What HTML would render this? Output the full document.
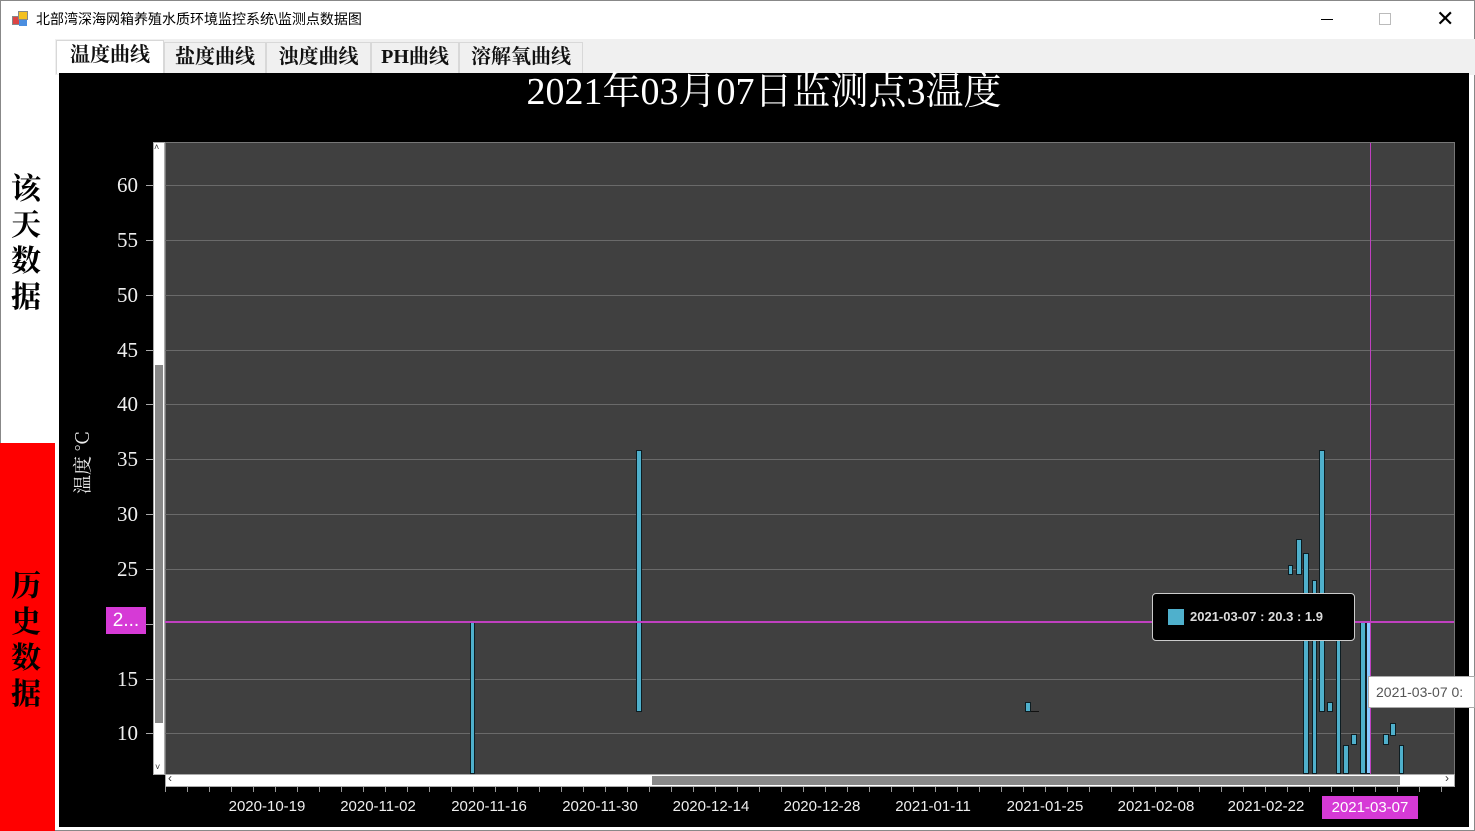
<!DOCTYPE html><html><head><meta charset="utf-8"><style>
*{margin:0;padding:0;box-sizing:border-box}
body{width:1475px;height:831px;background:#fff;position:relative;overflow:hidden;font-family:"Liberation Sans","Noto Sans CJK SC",sans-serif}
.a{position:absolute}
.tab{position:absolute;top:42px;height:31px;background:#f0f0f0;border:1px solid #d8d8d8;border-bottom:none;font-family:"Liberation Serif","Noto Serif CJK SC",serif;font-weight:bold;font-size:20px;line-height:29px;text-align:center;color:#111}
.grid{position:absolute;left:165px;width:1289px;height:1px;background:#6a6a6a}
.yl{position:absolute;left:100px;width:38px;text-align:right;color:#eee;font-family:"Liberation Serif",serif;font-size:21px;line-height:22px}
.yt{position:absolute;left:146px;width:7px;height:1px;background:#aaa}
.xl{position:absolute;top:797px;width:100px;text-align:center;color:#eee;font-size:15px;line-height:20px}
.b{position:absolute;background:#4fb0cc;border:1px solid #0d1d22}
.side{position:absolute;left:8px;width:36px;font-family:"Noto Serif CJK SC",serif;font-weight:bold;font-size:30px;line-height:36px;color:#000;text-align:center}
</style></head><body>
<div class="a" style="left:0;top:0;width:1475px;height:831px;border:1px solid #888"></div>
<div class="a" style="left:12px;top:11px;width:16px;height:16px">
<div class="a" style="left:0;top:5px;width:8px;height:9px;background:#d44;border:1px solid #888"></div>
<div class="a" style="left:6px;top:0;width:10px;height:9px;background:#f4c020;border:1px solid #888"></div>
<div class="a" style="left:7px;top:9px;width:8px;height:6px;background:#4a8ee0"></div></div>
<div class="a" style="left:36px;top:10px;font-size:14px;color:#000;line-height:18px">北部湾深海网箱养殖水质环境监控系统\监测点数据图</div>
<div class="a" style="left:1321px;top:19px;width:12px;height:1px;background:#000"></div>
<div class="a" style="left:1379px;top:13px;width:12px;height:12px;border:1px solid #bbb"></div>
<div class="a" style="left:1436px;top:7px;font-size:22px;line-height:24px;color:#000;font-weight:200">✕</div>
<div class="a" style="left:55px;top:39px;width:1420px;height:36px;background:#f0f0f0"></div>
<div class="tab" style="left:56px;top:40px;height:34px;width:108px;background:#fff">温度曲线</div>
<div class="tab" style="left:164px;width:102px">盐度曲线</div>
<div class="tab" style="left:266px;width:105px">浊度曲线</div>
<div class="tab" style="left:371px;width:88px">PH曲线</div>
<div class="tab" style="left:459px;width:124px">溶解氧曲线</div>
<div class="a" style="left:0;top:443px;width:55px;height:388px;background:#f00"></div>
<div class="side" style="top:168px">该<br>天<br>数<br>据</div>
<div class="side" style="top:565px">历<br>史<br>数<br>据</div>
<div class="a" style="left:59px;top:73px;width:1410px;height:754px;background:#000"></div>
<div class="a" style="left:360px;top:69px;width:808px;text-align:center;color:#fff;font-family:'Liberation Serif','Noto Serif CJK SC',serif;font-size:38px;line-height:46px">2021年03月07日监测点3温度</div>
<div class="a" style="left:165px;top:142px;width:1290px;height:633px;background:#404040;border:1px solid #777"></div>
<div class="grid" style="top:185px"></div><div class="grid" style="top:240px"></div><div class="grid" style="top:295px"></div><div class="grid" style="top:350px"></div><div class="grid" style="top:404px"></div><div class="grid" style="top:459px"></div><div class="grid" style="top:514px"></div><div class="grid" style="top:569px"></div><div class="grid" style="top:679px"></div><div class="grid" style="top:733px"></div>
<div class="yl" style="top:174px">60</div><div class="yl" style="top:229px">55</div><div class="yl" style="top:284px">50</div><div class="yl" style="top:339px">45</div><div class="yl" style="top:393px">40</div><div class="yl" style="top:448px">35</div><div class="yl" style="top:503px">30</div><div class="yl" style="top:558px">25</div><div class="yl" style="top:668px">15</div><div class="yl" style="top:722px">10</div>
<div class="yt" style="top:185px"></div><div class="yt" style="top:240px"></div><div class="yt" style="top:295px"></div><div class="yt" style="top:350px"></div><div class="yt" style="top:404px"></div><div class="yt" style="top:459px"></div><div class="yt" style="top:514px"></div><div class="yt" style="top:569px"></div><div class="yt" style="top:624px"></div><div class="yt" style="top:679px"></div><div class="yt" style="top:733px"></div>
<div class="a" style="left:106px;top:607px;width:40px;height:27px;background:#d63ad6;color:#fff;font-size:19px;line-height:27px;text-align:center">2...</div>
<div class="a" style="left:57px;top:458px;width:50px;transform:rotate(-90deg);color:#eee;font-family:'Noto Serif CJK SC',serif;font-size:19px;line-height:22px;white-space:nowrap;text-align:center">温度 °C</div>
<div class="a" style="left:153px;top:142px;width:12px;height:633px;background:#fff;border:1px solid #aaa"></div>
<div class="a" style="left:155px;top:365px;width:8px;height:358px;background:#888"></div>
<div class="a" style="left:154px;top:142px;font-size:9px;color:#333">˄</div>
<div class="a" style="left:155px;top:762px;font-size:9px;color:#333">˅</div>
<div class="a" style="left:165px;top:774px;width:1290px;height:13px;background:#fff;border:1px solid #aaa"></div>
<div class="a" style="left:652px;top:776px;width:748px;height:9px;background:#888"></div>
<div class="a" style="left:168px;top:771px;font-size:12px;color:#333">‹</div>
<div class="a" style="left:1445px;top:771px;font-size:12px;color:#333">›</div>
<div class="a" style="left:165px;top:787px;width:1290px;height:5px;background:repeating-linear-gradient(90deg,#999 0 1px,transparent 1px 22px)"></div>
<div class="xl" style="left:217px">2020-10-19</div><div class="xl" style="left:328px">2020-11-02</div><div class="xl" style="left:439px">2020-11-16</div><div class="xl" style="left:550px">2020-11-30</div><div class="xl" style="left:661px">2020-12-14</div><div class="xl" style="left:772px">2020-12-28</div><div class="xl" style="left:883px">2021-01-11</div><div class="xl" style="left:995px">2021-01-25</div><div class="xl" style="left:1106px">2021-02-08</div><div class="xl" style="left:1216px">2021-02-22</div>
<div class="xl" style="left:1322px;width:96px;top:796px;height:23px;line-height:23px;background:#d63ad6;color:#fff">2021-03-07</div>
<div class="b" style="left:470px;top:622px;width:5px;height:152px"></div>
<div class="b" style="left:636px;top:450px;width:6px;height:262px"></div>
<div class="b" style="left:1025px;top:702px;width:6px;height:10px"></div>
<div class="a" style="left:1031px;top:711px;width:8px;height:1px;background:#111"></div>
<div class="b" style="left:1288px;top:565px;width:5px;height:10px"></div>
<div class="b" style="left:1296px;top:539px;width:6px;height:36px"></div>
<div class="b" style="left:1303px;top:553px;width:6px;height:221px"></div>
<div class="b" style="left:1312px;top:580px;width:5px;height:194px"></div>
<div class="b" style="left:1319px;top:450px;width:6px;height:262px"></div>
<div class="b" style="left:1327px;top:702px;width:6px;height:10px"></div>
<div class="b" style="left:1336px;top:600px;width:5px;height:174px"></div>
<div class="b" style="left:1343px;top:745px;width:6px;height:29px"></div>
<div class="b" style="left:1351px;top:734px;width:6px;height:11px"></div>
<div class="b" style="left:1360px;top:622px;width:6px;height:152px"></div>
<div class="b" style="left:1366px;top:622px;width:5px;height:152px;background:#8ac8ff"></div>
<div class="b" style="left:1383px;top:734px;width:6px;height:11px"></div>
<div class="b" style="left:1390px;top:723px;width:6px;height:13px"></div>
<div class="b" style="left:1399px;top:745px;width:5px;height:29px"></div>
<div class="a" style="left:165px;top:621px;width:1289px;height:2px;background:#c040c0"></div>
<div class="a" style="left:1370px;top:143px;width:1px;height:631px;background:#c040c0"></div>
<div class="a" style="left:1152px;top:593px;width:203px;height:48px;background:#000;border:1px solid #ccc;border-radius:4px"></div>
<div class="a" style="left:1168px;top:609px;width:16px;height:16px;background:#4fb0cc"></div>
<div class="a" style="left:1190px;top:608px;color:#ddd;font-size:13px;line-height:18px;font-weight:bold">2021-03-07 : 20.3 : 1.9</div>
<div class="a" style="left:1368px;top:676px;width:107px;height:32px;background:#fff;border:1px solid #aaa;color:#555;font-size:14px;line-height:30px;padding-left:7px;white-space:nowrap;overflow:hidden">2021-03-07 0:</div>
</body></html>
